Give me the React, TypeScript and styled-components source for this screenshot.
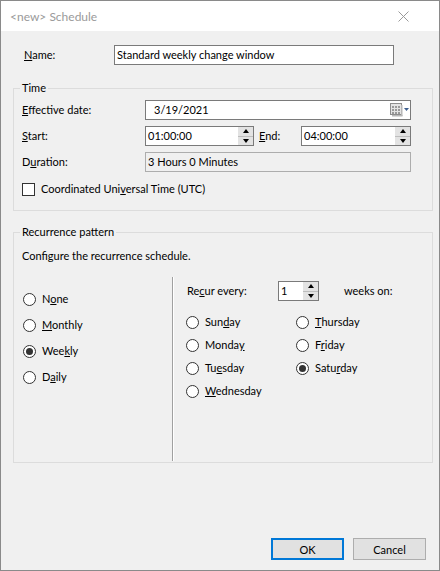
import React from "react";
import styled, { createGlobalStyle } from "styled-components";

const FONT = `Lato, "Liberation Sans", sans-serif`;

const GlobalStyle = createGlobalStyle`
  html, body {
    margin: 0;
    padding: 0;
    background: #f0f0f0;
  }
  body {
    font-family: ${FONT};
    font-size: 11px;
    color: #000;
  }
  * {
    box-sizing: border-box;
  }
`;

const Window = styled.div`
  width: 440px;
  height: 571px;
  border: 1px solid #8a8a8a;
  background: #f0f0f0;
  display: flex;
  flex-direction: column;
  overflow: hidden;
`;

const TitleBar = styled.div`
  height: 30px;
  background: #fff;
  display: flex;
  align-items: center;
  justify-content: space-between;
  padding: 0 30px 0 9px;
  color: #9a9a9a;
  font-size: 12px;
`;

const CloseGlyph = () => (
  <svg width="11" height="11" viewBox="0 0 11 11">
    <path d="M0.5 0.5 L10.5 10.5 M10.5 0.5 L0.5 10.5" stroke="#9a9a9a" strokeWidth="1" />
  </svg>
);

const Body = styled.div`
  flex: 1;
  display: flex;
  flex-direction: column;
  padding: 0 6px 0 12px;
`;

const NameRow = styled.div`
  display: grid;
  grid-template-columns: 90px 280px;
  align-items: center;
  height: 20px;
  margin-top: 14px;
  padding-left: 11px;
`;

const Label = styled.span`
  white-space: nowrap;
  line-height: 16px;
`;

const U = styled.span`
  text-decoration: underline;
  text-underline-offset: 1px;
`;

const TextBox = styled.div<{ $readOnly?: boolean; $width?: number }>`
  height: 20px;
  width: ${(p) => (p.$width ? `${p.$width}px` : "100%")};
  border: 1px solid ${(p) => (p.$readOnly ? "#adadad" : "#7a7a7a")};
  background: ${(p) => (p.$readOnly ? "#f0f0f0" : "#fff")};
  display: flex;
  align-items: center;
  padding-left: 2px;
  line-height: 16px;
  white-space: nowrap;
`;

const TextValue = styled.span<{ $indent?: number }>`
  flex: 1;
  padding-left: ${(p) => p.$indent ?? 0}px;
`;

const Group = styled.fieldset<{ $gap: number }>`
  margin: ${(p) => p.$gap}px 0 0 0;
  padding: 0;
  border: 1px solid #dcdcdc;
  min-width: 0;
`;

const Legend = styled.legend`
  margin-left: 6px;
  padding: 0 2px;
  line-height: 16px;
  font-size: 11px;
`;

const TimeGrid = styled.div`
  display: grid;
  grid-template-columns: 123px 266px;
  grid-auto-rows: 20px;
  align-items: center;
  row-gap: 6px;
  padding: 4px 0 12px 8px;
`;

const SplitField = styled.div`
  display: flex;
  align-items: center;
`;

const EndLabel = styled(Label)`
  width: 47px;
  padding-left: 5px;
`;

const CheckRow = styled.label`
  grid-column: 1 / span 2;
  display: flex;
  align-items: center;
  gap: 6px;
  margin-top: 2px;
`;

const CheckBox = styled.span`
  width: 13px;
  height: 13px;
  border: 1px solid #333;
  background: #fff;
`;

const SpinWrap = styled.div`
  width: 16px;
  height: 18px;
  display: flex;
  flex-direction: column;
  background: #e3e3e3;
  border-left: 1px solid #fff;
`;

const SpinHalf = styled.div<{ $down?: boolean }>`
  flex: 1;
  display: flex;
  align-items: center;
  justify-content: center;
  border-top: ${(p) => (p.$down ? "1px solid #bdbdbd" : "none")};
`;

const Arrow = styled.span<{ $down?: boolean }>`
  width: 0;
  height: 0;
  border-left: 3.5px solid transparent;
  border-right: 3.5px solid transparent;
  ${(p) => (p.$down ? "border-top: 4px solid #000;" : "border-bottom: 4px solid #000;")}
`;

const Spinner = () => (
  <SpinWrap>
    <SpinHalf>
      <Arrow />
    </SpinHalf>
    <SpinHalf $down>
      <Arrow $down />
    </SpinHalf>
  </SpinWrap>
);

const CalendarGlyph = () => (
  <svg width="20" height="14" viewBox="0 0 20 14">
    <rect x="0.5" y="0.5" width="11" height="11" fill="#e4e4e4" stroke="#8e8e8e" />
    <rect x="11" y="2" width="1.5" height="11" fill="#b8b8b8" />
    <rect x="2" y="12" width="10.5" height="1.5" fill="#b8b8b8" />
    {[2, 5, 8].map((x) =>
      [3, 6, 9].map((y) => <rect key={`${x}-${y}`} x={x} y={y} width="2" height="2" fill="#9a9a9a" />)
    )}
    <path d="M14 5 L19 5 L16.5 8 Z" fill="#3d5f8f" />
  </svg>
);

const Intro = styled.div`
  padding: 8px 0 0 8px;
  line-height: 16px;
`;

const Columns = styled.div`
  display: flex;
  height: 184px;
  margin-top: 13px;
  margin-bottom: 1px;
`;

const LeftColumn = styled.div`
  width: 159px;
  border-right: 1px solid #a0a0a0;
  display: flex;
  flex-direction: column;
  gap: 6px;
  padding: 12px 0 0 9px;
`;

const RightColumn = styled.div`
  flex: 1;
  border-left: 1px solid #fff;
  padding: 4px 0 0 12px;
`;

const RecurRow = styled.div`
  display: flex;
  align-items: center;
  height: 20px;
`;

const RecurLabel = styled(Label)`
  width: 92px;
  padding-left: 1px;
`;

const WeeksLabel = styled(Label)`
  margin-left: 25px;
`;

const Days = styled.div`
  display: grid;
  grid-template-columns: 110px 110px;
  grid-auto-flow: column;
  grid-template-rows: repeat(4, 20px);
  row-gap: 3px;
  margin-top: 11px;
`;

const RadioRow = styled.label`
  display: flex;
  align-items: center;
  gap: 6px;
  height: 20px;
  white-space: nowrap;
`;

const RadioCircle = styled.span<{ $checked?: boolean }>`
  width: 13px;
  height: 13px;
  border-radius: 50%;
  border: 1px solid #333;
  background: #fff;
  display: flex;
  align-items: center;
  justify-content: center;
  &::after {
    content: "";
    width: 7px;
    height: 7px;
    border-radius: 50%;
    background: ${(p) => (p.$checked ? "#333" : "transparent")};
  }
`;

const Footer = styled.div`
  margin-top: auto;
  display: flex;
  justify-content: flex-end;
  gap: 9px;
  padding: 0 7px 10px 0;
`;

const Button = styled.button<{ $default?: boolean }>`
  width: 73px;
  height: 22px;
  font-family: ${FONT};
  font-size: 11px;
  color: #000;
  background: #e1e1e1;
  border: ${(p) => (p.$default ? "2px solid #0078d7" : "1px solid #adadad")};
  padding: 0;
`;

type Access = [string, string, string];

const Caption = ({ text }: { text: Access }) => (
  <>
    {text[0]}
    <U>{text[1]}</U>
    {text[2]}
  </>
);

const Radio = ({ text, checked }: { text: Access; checked?: boolean }) => (
  <RadioRow>
    <RadioCircle $checked={checked} />
    <Label>
      <Caption text={text} />
    </Label>
  </RadioRow>
);

const patterns: { text: Access; checked?: boolean }[] = [
  { text: ["N", "o", "ne"] },
  { text: ["", "M", "onthly"] },
  { text: ["Wee", "k", "ly"], checked: true },
  { text: ["D", "a", "ily"] },
];

const days: { text: Access; checked?: boolean }[] = [
  { text: ["Sun", "d", "ay"] },
  { text: ["Monda", "y", ""] },
  { text: ["Tu", "e", "sday"] },
  { text: ["", "W", "ednesday"] },
  { text: ["", "T", "hursday"] },
  { text: ["F", "r", "iday"] },
  { text: ["Satu", "r", "day"], checked: true },
];

export default function App() {
  return (
    <>
      <GlobalStyle />
      <Window>
        <TitleBar>
          <span>&lt;new&gt; Schedule</span>
          <CloseGlyph />
        </TitleBar>
        <Body>
          <NameRow>
            <Label>
              <Caption text={["", "N", "ame:"]} />
            </Label>
            <TextBox>
              <TextValue>Standard weekly change window</TextValue>
            </TextBox>
          </NameRow>

          <Group $gap={15}>
            <Legend>Time</Legend>
            <TimeGrid>
              <Label>
                <Caption text={["", "E", "ffective date:"]} />
              </Label>
              <TextBox>
                <TextValue $indent={6}>3/19/2021</TextValue>
                <CalendarGlyph />
              </TextBox>

              <Label>
                <Caption text={["", "S", "tart:"]} />
              </Label>
              <SplitField>
                <TextBox $width={109}>
                  <TextValue>01:00:00</TextValue>
                  <Spinner />
                </TextBox>
                <EndLabel>
                  <Caption text={["", "E", "nd:"]} />
                </EndLabel>
                <TextBox $width={110}>
                  <TextValue>04:00:00</TextValue>
                  <Spinner />
                </TextBox>
              </SplitField>

              <Label>
                <Caption text={["D", "u", "ration:"]} />
              </Label>
              <TextBox $readOnly>
                <TextValue>3 Hours 0 Minutes</TextValue>
              </TextBox>

              <CheckRow>
                <CheckBox />
                <Label>
                  <Caption text={["Coordinated Uni", "v", "ersal Time (UTC)"]} />
                </Label>
              </CheckRow>
            </TimeGrid>
          </Group>

          <Group $gap={13}>
            <Legend>Recurrence pattern</Legend>
            <Intro>Configure the recurrence schedule.</Intro>
            <Columns>
              <LeftColumn>
                {patterns.map((p) => (
                  <Radio key={p.text.join("")} text={p.text} checked={p.checked} />
                ))}
              </LeftColumn>
              <RightColumn>
                <RecurRow>
                  <RecurLabel>
                    <Caption text={["Re", "c", "ur every:"]} />
                  </RecurLabel>
                  <TextBox $width={41}>
                    <TextValue>1</TextValue>
                    <Spinner />
                  </TextBox>
                  <WeeksLabel>weeks on:</WeeksLabel>
                </RecurRow>
                <Days>
                  {days.map((d) => (
                    <Radio key={d.text.join("")} text={d.text} checked={d.checked} />
                  ))}
                </Days>
              </RightColumn>
            </Columns>
          </Group>

          <Footer>
            <Button $default>OK</Button>
            <Button>Cancel</Button>
          </Footer>
        </Body>
      </Window>
    </>
  );
}
